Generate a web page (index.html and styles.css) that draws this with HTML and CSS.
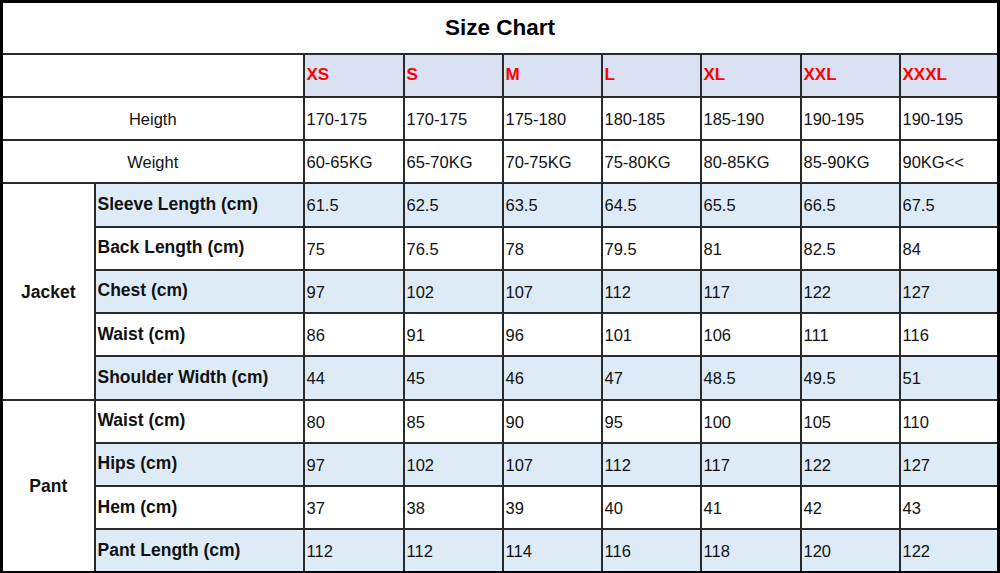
FILE: index.html
```html
<!DOCTYPE html>
<html lang="en">
<head>
<meta charset="utf-8">
<title>Size Chart</title>
<link rel="stylesheet" href="styles.css">
</head>
<body>
<table class="chart">
  <colgroup>
    <col class="c-group"><col class="c-label">
    <col class="c-wide"><col class="c-size"><col class="c-size"><col class="c-size"><col class="c-wide"><col class="c-size"><col class="c-size">
  </colgroup>
  <tr class="r-title"><th colspan="9" class="title">Size Chart</th></tr>
  <tr class="r-head">
    <td colspan="2" class="blank"></td>
    <th class="size">XS</th><th class="size">S</th><th class="size">M</th><th class="size">L</th><th class="size">XL</th><th class="size">XXL</th><th class="size">XXXL</th>
  </tr>
  <tr>
    <td colspan="2" class="plain-label">Heigth</td>
    <td>170-175</td><td>170-175</td><td>175-180</td><td>180-185</td><td>185-190</td><td>190-195</td><td>190-195</td>
  </tr>
  <tr>
    <td colspan="2" class="plain-label">Weight</td>
    <td>60-65KG</td><td>65-70KG</td><td>70-75KG</td><td>75-80KG</td><td>80-85KG</td><td>85-90KG</td><td>90KG&lt;&lt;</td>
  </tr>
  <tr class="tint">
    <th rowspan="5" class="group">Jacket</th>
    <th class="label">Sleeve Length (cm)</th>
    <td>61.5</td><td>62.5</td><td>63.5</td><td>64.5</td><td>65.5</td><td>66.5</td><td>67.5</td>
  </tr>
  <tr>
    <th class="label">Back Length (cm)</th>
    <td>75</td><td>76.5</td><td>78</td><td>79.5</td><td>81</td><td>82.5</td><td>84</td>
  </tr>
  <tr class="tint">
    <th class="label">Chest (cm)</th>
    <td>97</td><td>102</td><td>107</td><td>112</td><td>117</td><td>122</td><td>127</td>
  </tr>
  <tr>
    <th class="label">Waist (cm)</th>
    <td>86</td><td>91</td><td>96</td><td>101</td><td>106</td><td>111</td><td>116</td>
  </tr>
  <tr class="tint">
    <th class="label">Shoulder Width (cm)</th>
    <td>44</td><td>45</td><td>46</td><td>47</td><td>48.5</td><td>49.5</td><td>51</td>
  </tr>
  <tr>
    <th rowspan="4" class="group">Pant</th>
    <th class="label">Waist (cm)</th>
    <td>80</td><td>85</td><td>90</td><td>95</td><td>100</td><td>105</td><td>110</td>
  </tr>
  <tr class="tint">
    <th class="label">Hips (cm)</th>
    <td>97</td><td>102</td><td>107</td><td>112</td><td>117</td><td>122</td><td>127</td>
  </tr>
  <tr>
    <th class="label">Hem (cm)</th>
    <td>37</td><td>38</td><td>39</td><td>40</td><td>41</td><td>42</td><td>43</td>
  </tr>
  <tr class="tint">
    <th class="label">Pant Length (cm)</th>
    <td>112</td><td>112</td><td>114</td><td>116</td><td>118</td><td>120</td><td>122</td>
  </tr>
</table>
</body>
</html>
```
FILE: styles.css
```css
html, body {
  margin: 0;
  padding: 0;
  background: #ffffff;
}

body {
  width: 1000px;
  height: 573px;
  overflow: hidden;
  font-family: "Liberation Sans", Arial, sans-serif;
  color: #111111;
}

.chart {
  width: 1000px;
  height: 573px;
  border-collapse: collapse;
  table-layout: fixed;
  border: 3px solid #000000;
}

.c-group { width: 93px; }
.c-label { width: 209px; }
.c-size { width: 99px; }
.c-wide { width: 100px; }

.chart tr { height: 43.25px; }
.chart .r-title { height: 52px; }

.chart th,
.chart td {
  border: 2px solid #2a2a2a;
  padding: 2px 0 0 2px;
  font-size: 16.5px;
  font-weight: normal;
  text-align: left;
  vertical-align: middle;
  white-space: nowrap;
  overflow: hidden;
}

.chart .title {
  font-size: 22.5px;
  font-weight: bold;
  text-align: center;
  padding: 0;
  color: #000000;
}

.r-head .size {
  background: #d9e1f2;
  color: #ff0000;
  font-weight: bold;
  font-size: 17px;
  padding-top: 0;
}

.chart .plain-label {
  text-align: center;
  padding-left: 0;
}

.chart .group {
  font-weight: bold;
  font-size: 17.5px;
  text-align: center;
  padding-left: 0;
  background: #ffffff;
}

.chart .label {
  font-weight: bold;
  font-size: 17.5px;
  padding-top: 0;
  padding-bottom: 1px;
}

.tint .label,
.tint td {
  background: #ddebf7;
}
```
